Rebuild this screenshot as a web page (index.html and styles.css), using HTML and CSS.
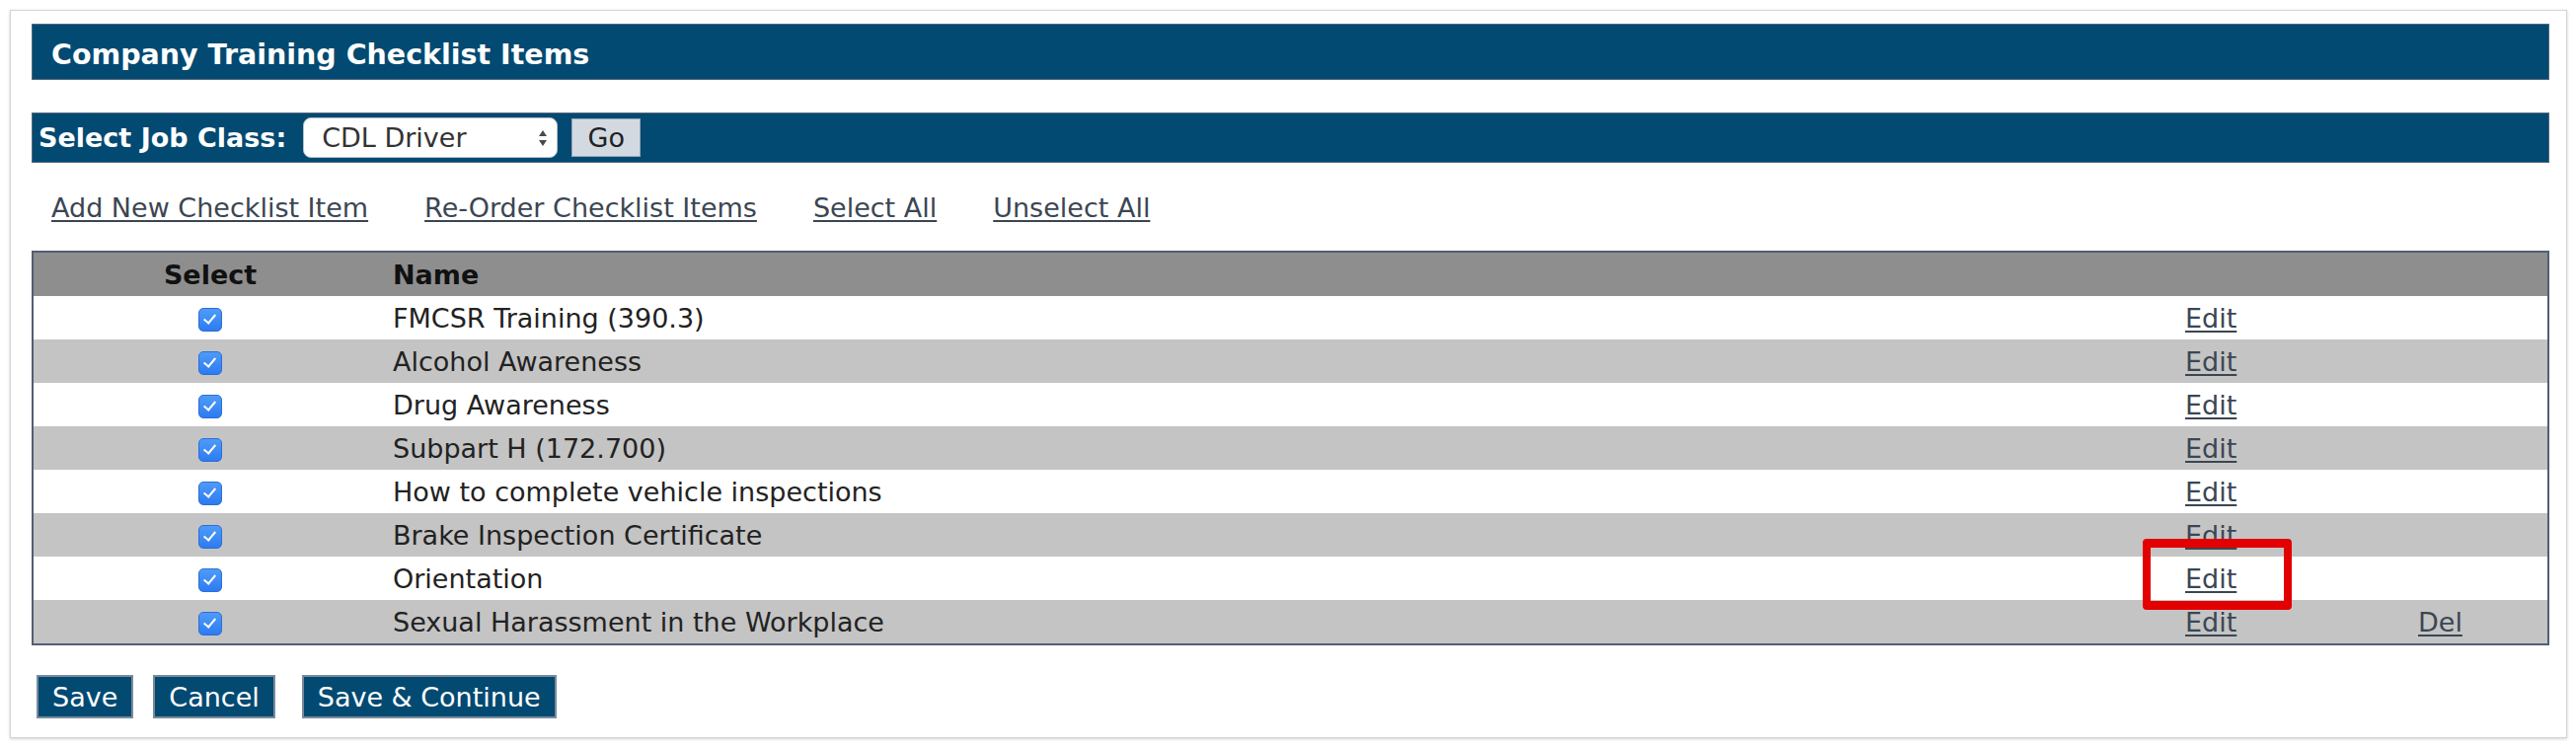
FILE: index.html
```html
<!DOCTYPE html>
<html lang="en">
<head>
  <meta charset="utf-8" />
  <title>Company Training Checklist Items</title>
  <link rel="stylesheet" href="styles.css">
</head>
<body>
  <div id="main-body">

    <h1 class="bar title">Company Training Checklist Items</h1>

    <form class="bar job-class">
      <label for="job-class">Select Job Class:</label>
      <div class="select" id="job-class">
        <span>CDL Driver</span>
        <svg width="10" height="18" viewBox="0 0 10 18"><path d="M5 1 9 7H1zM5 17 1 11h8z" fill="#4a4a4a"/></svg>
      </div>
      <button type="submit" class="go">Go</button>
    </form>

    <div class="actions">
      <a href="#">Add New Checklist Item</a>
      <a href="#">Re-Order Checklist Items</a>
      <a href="#">Select All</a>
      <a href="#">Unselect All</a>
    </div>

    <table class="items">
      <colgroup>
        <col class="c-select"><col><col class="c-edit"><col class="c-del">
      </colgroup>
      <thead>
        <tr><th class="sel">Select</th><th>Name</th><th></th><th></th></tr>
      </thead>
      <tbody>
        <tr><td class="sel"><input type="checkbox" checked></td><td>FMCSR Training (390.3)</td><td><a href="#">Edit</a></td><td></td></tr>
        <tr><td class="sel"><input type="checkbox" checked></td><td>Alcohol Awareness</td><td><a href="#">Edit</a></td><td></td></tr>
        <tr><td class="sel"><input type="checkbox" checked></td><td>Drug Awareness</td><td><a href="#">Edit</a></td><td></td></tr>
        <tr><td class="sel"><input type="checkbox" checked></td><td>Subpart H (172.700)</td><td><a href="#">Edit</a></td><td></td></tr>
        <tr><td class="sel"><input type="checkbox" checked></td><td>How to complete vehicle inspections</td><td><a href="#">Edit</a></td><td></td></tr>
        <tr><td class="sel"><input type="checkbox" checked></td><td>Brake Inspection Certificate</td><td><a href="#">Edit</a></td><td></td></tr>
        <tr><td class="sel"><input type="checkbox" checked></td><td>Orientation</td><td class="marked"><a href="#">Edit</a><span class="callout"></span></td><td></td></tr>
        <tr><td class="sel"><input type="checkbox" checked></td><td>Sexual Harassment in the Workplace</td><td><a href="#">Edit</a></td><td><a href="#">Del</a></td></tr>
      </tbody>
    </table>

    <div class="buttons">
      <button type="button">Save</button>
      <button type="button">Cancel</button>
      <button type="button" class="apart">Save &amp; Continue</button>
    </div>

  </div>
</body>
</html>
```

FILE: styles.css
```css
html, body { font-family: "DejaVu Sans", Verdana, sans-serif; font-size: 27px; margin: 0; padding: 0; color: #222; background: #fff; }
body { padding: 10px 9px 10px 10px; }
#main-body { border: 1px solid #d4d4d4; box-shadow: 0 1px 3px rgba(0,0,0,.18); padding: 13px 17px 19px 21px; }
a, a:visited { color: #3b4653; text-decoration: underline; text-decoration-thickness: 2px; text-underline-offset: 3px; }

/* dark blue header bars */
.bar { background: #034a72; border: 1px solid #56687d; box-sizing: border-box; color: #fff; margin: 0; display: flex; align-items: center; }
.title { height: 57px; padding: 5px 0 0 19px; font-size: 28.5px; font-weight: bold; margin-bottom: 33px; }
.job-class { height: 51px; padding-left: 6px; font-weight: bold; }
.job-class label { margin-right: 17px; }
.select { display: flex; align-items: center; justify-content: space-between; width: 258px; height: 41px; box-sizing: border-box; background: #fff; border: 1px solid #b8bec6; border-radius: 8px; padding: 0 9px 0 18px; color: #333; font-weight: normal; }
.go { height: 39px; width: 70px; margin-left: 14px; padding: 0; font: inherit; font-weight: normal; color: #222; background: #d3d9e1; border: 1px solid #98a6b6; }

.actions { display: flex; gap: 57px; padding-left: 20px; margin: 30px 0 28px; line-height: 31px; }

/* checklist table */
.items { width: 100%; table-layout: fixed; border-collapse: separate; border-spacing: 0; border: 2px solid #4f6073; }
.c-select { width: 358px; }
.c-edit { width: 236px; }
.c-del { width: 137px; }
.items th { background: #8e8e8e; color: #111; height: 44px; padding: 0 6px; text-align: left; font-weight: bold; }
.items td { height: 44px; padding: 0 6px; vertical-align: middle; white-space: nowrap; }
.items .sel { text-align: center; padding: 0; }
.items tbody tr:nth-child(even) td { background: #c4c4c4; }
.items input[type=checkbox] { appearance: none; -webkit-appearance: none; margin: 0; width: 24px; height: 24px; border-radius: 5px; background: linear-gradient(#4f9bf9, #2d7bf1); border: 1px solid #2b6fd5; box-sizing: border-box; vertical-align: middle; position: relative; }
.items input[type=checkbox]::after { content: ""; position: absolute; left: 7px; top: 3px; width: 5px; height: 10px; border: solid #fff; border-width: 0 2.5px 2.5px 0; transform: rotate(40deg); }

/* red annotation box around one edit link */
.marked { position: relative; }
.callout { position: absolute; left: -37px; top: -18px; width: 151px; height: 72px; box-sizing: border-box; border: solid #e20000; border-width: 9px 8px; border-radius: 4px; }

.buttons { display: flex; gap: 20px; margin-top: 30px; padding-left: 5px; }
.buttons button { height: 44px; padding: 0 14px; font: inherit; color: #fff; background: #034a72; border: 2px solid #7a8a9b; }
.buttons .apart { margin-left: 7px; }
```
